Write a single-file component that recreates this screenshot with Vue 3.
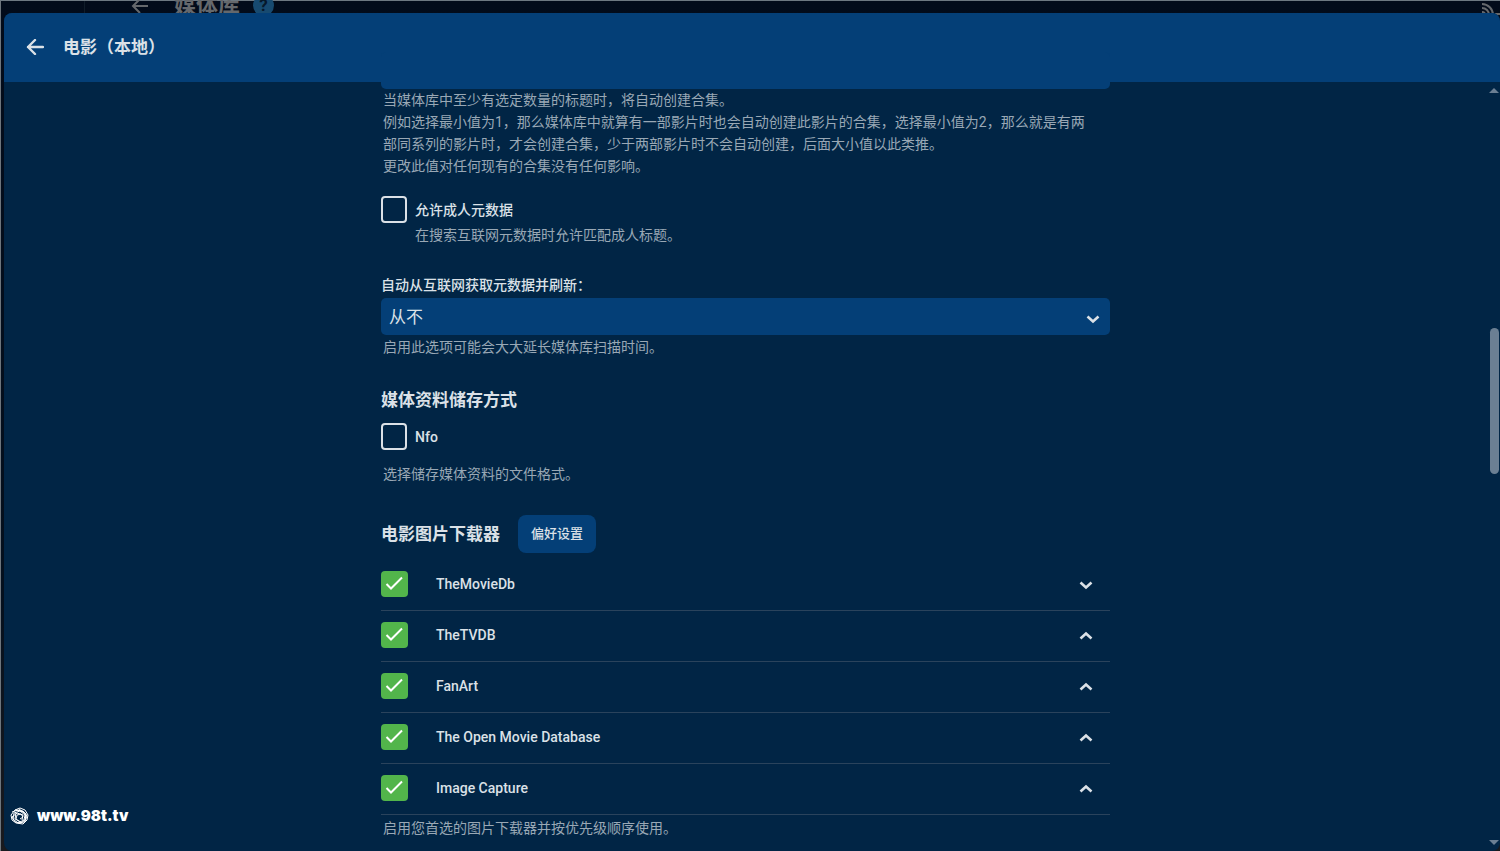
<script setup>
import { ref } from 'vue'

const adult = ref(false)
const nfo = ref(false)
const minimum = ref('2')
const refresh = ref('never')
const downloaders = ref([
  { name: 'TheMovieDb', enabled: true, direction: 'down' },
  { name: 'TheTVDB', enabled: true, direction: 'up' },
  { name: 'FanArt', enabled: true, direction: 'up' },
  { name: 'The Open Movie Database', enabled: true, direction: 'up' },
  { name: 'Image Capture', enabled: true, direction: 'up' }
])
</script>

<template>
  <div class="screen">
    <div class="page" aria-hidden="true">
      <div class="drawer"></div>
      <svg class="page-back" width="24" height="24" viewBox="0 0 24 24"><path d="M20 12H5M12 5l-7 7 7 7" /></svg>
      <span class="page-title">媒体库</span>
      <span class="page-help">?</span>
      <svg class="cast" width="24" height="24" viewBox="0 0 24 24">
        <path d="M2 6V4h20v16h-7M2 18a3 3 0 0 1 3 3M2 14a7 7 0 0 1 7 7M2 10a11 11 0 0 1 11 11" />
      </svg>
    </div>

    <main class="dialog">
      <header class="bar">
        <button class="back" type="button" aria-label="返回">
          <svg width="18" height="16" viewBox="0 0 18 16"><path d="M17 8H2M9 1L2 8l7 7" /></svg>
        </button>
        <h1>电影（本地）</h1>
      </header>

      <div class="body">
        <form class="form" @submit.prevent>
          <div class="select-box first">
            <select v-model="minimum" aria-label="合集最小数量">
              <option value="2"></option>
            </select>
          </div>
          <p class="help">
            当媒体库中至少有选定数量的标题时，将自动创建合集。<br />
            例如选择最小值为1，那么媒体库中就算有一部影片时也会自动创建此影片的合集，选择最小值为2，那么就是有两<br />
            部同系列的影片时，才会创建合集，少于两部影片时不会自动创建，后面大小值以此类推。<br />
            更改此值对任何现有的合集没有任何影响。
          </p>

          <div class="adult">
            <label class="check">
              <input v-model="adult" type="checkbox" aria-describedby="adult-help" />
              <span>允许成人元数据</span>
            </label>
            <p id="adult-help" class="help nested">在搜索互联网元数据时允许匹配成人标题。</p>
          </div>

          <div class="refresh">
            <label class="caption" for="refresh">自动从互联网获取元数据并刷新：</label>
            <div class="select-box">
              <select id="refresh" v-model="refresh">
                <option value="never">从不</option>
              </select>
              <svg class="chevron" width="14" height="10" viewBox="0 0 14 10"><path d="M1.5 2.5L7 7.5l5.5-5" /></svg>
            </div>
            <p class="help">启用此选项可能会大大延长媒体库扫描时间。</p>
          </div>

          <section class="savers">
            <h2>媒体资料储存方式</h2>
            <label class="check">
              <input v-model="nfo" type="checkbox" />
              <span>Nfo</span>
            </label>
            <p class="help">选择储存媒体资料的文件格式。</p>
          </section>

          <section class="fetchers">
            <div class="heading">
              <h2>电影图片下载器</h2>
              <button class="preferences" type="button">偏好设置</button>
            </div>
            <ul>
              <li v-for="item in downloaders" :key="item.name">
                <label class="fetcher">
                  <span class="tick">
                    <input v-model="item.enabled" type="checkbox" />
                    <svg v-if="item.enabled" width="27" height="26" viewBox="0 0 27 26"><path d="M5.5 13l4.5 4.5L21 6.5" /></svg>
                  </span>
                  <span>{{ item.name }}</span>
                </label>
                <button class="move" type="button" :aria-label="item.name">
                  <svg class="chevron" :class="item.direction" width="14" height="10" viewBox="0 0 14 10"><path d="M1.5 2.5L7 7.5l5.5-5" /></svg>
                </button>
              </li>
            </ul>
            <p class="help">启用您首选的图片下载器并按优先级顺序使用。</p>
          </section>
        </form>

        <div class="rail" aria-hidden="true">
          <svg width="10" height="5" viewBox="0 0 10 5"><path d="M5 0l5 5H0z" /></svg>
          <div class="track"><div class="thumb"></div></div>
          <svg width="10" height="5" viewBox="0 0 10 5"><path d="M0 0h10L5 5z" /></svg>
        </div>
      </div>
    </main>

    <div class="watermark">
      <svg width="20" height="18" viewBox="0 0 20 18">
        <path d="M5 3l5-2 5 2 3 5-1 5-4 4-7-1-4-3-1-5 4-5 8 1 4 5-3 6-6 1-5-4 1-6 6-2 5 4-1 5-4 2-4-3 1-4 4-1 2 3-3 2" />
        <path d="M2 5l6-2 7 3 1 6-5 4-6-1-3-5 5-4 6 2-1 5M6 6l-1 6 6 3M9 2l7 5-1 8" />
      </svg>
      <span>www.98t.tv</span>
    </div>
  </div>
</template>

<style>
html,
body {
  margin: 0;
  background: #020c1b;
}
</style>

<style scoped>
.screen {
  position: relative;
  box-sizing: border-box;
  height: 100vh;
  overflow: hidden;
  padding: 13px 0 0 4px;
  background: linear-gradient(#020b1a, #04101e 70%, #191a1e);
  color: #dbe1e7;
  font-family: Roboto, "Noto Sans CJK SC", sans-serif;
  font-size: 14px;
  line-height: 22px;
}

.page {
  position: absolute;
  inset: 0;
  border-top: 1px solid #6d7881;
  border-left: 1px solid #6d757c;
  color: #65686c;
}

.drawer {
  position: absolute;
  top: 0;
  left: 0;
  width: 83px;
  height: 100%;
  border-right: 1px solid #101c29;
}

.page svg {
  fill: none;
  stroke: #65686c;
  stroke-width: 2;
}

.page-back {
  position: absolute;
  top: -7px;
  left: 127px;
}

.page-title {
  position: absolute;
  top: -8px;
  left: 173px;
  font-size: 22px;
  font-weight: 700;
  line-height: 26px;
}

.page-help {
  position: absolute;
  top: -6px;
  left: 252px;
  width: 21px;
  height: 21px;
  border-radius: 50%;
  background: #174a70;
  color: #06182b;
  font-size: 17px;
  font-weight: 700;
  line-height: 21px;
  text-align: center;
}

.cast {
  position: absolute;
  top: -7px;
  right: -4px;
}

.dialog {
  position: relative;
  display: flex;
  flex-direction: column;
  height: 100%;
  overflow: hidden;
  border-radius: 8px;
  background: #012545;
}

.bar {
  display: flex;
  flex: none;
  align-items: center;
  gap: 12px;
  box-sizing: border-box;
  height: 69px;
  padding: 0 0 1px 15px;
  background: #043f77;
}

button {
  padding: 0;
  border: 0;
  background: none;
  color: inherit;
  font: inherit;
}

.back {
  display: grid;
  place-items: center;
  width: 32px;
  height: 32px;
}

.back svg {
  fill: none;
  stroke: #dbe1e7;
  stroke-width: 2.4;
  stroke-linecap: round;
  stroke-linejoin: round;
}

h1,
h2 {
  margin: 0;
  font-size: 17px;
  font-weight: 700;
  line-height: 22px;
}

.body {
  display: flex;
  flex: 1;
  min-height: 0;
}

.form {
  width: 100%;
  max-width: 729px;
  height: max-content;
  margin: 0 auto;
}

.select-box {
  display: grid;
  align-items: center;
}

.select-box.first {
  margin-top: -30px;
}

.select-box > * {
  grid-area: 1 / 1;
}

.select-box .chevron {
  justify-self: end;
  margin: 4px 10px 0 0;
  pointer-events: none;
}

select {
  width: 100%;
  height: 37px;
  padding: 0 32px 0 8px;
  border: 0;
  border-radius: 5px;
  appearance: none;
  background: #043f77;
  color: #dbe1e7;
  font-family: inherit;
  font-size: 17px;
}

.chevron {
  display: block;
  fill: none;
  stroke: #dbe1e7;
  stroke-width: 2.6;
}

.chevron.up {
  transform: rotate(180deg);
}

.help {
  margin: 0;
  padding-left: 2px;
  color: #99a8b5;
}

.help.nested {
  padding: 1px 0 0 34px;
}

.check {
  display: flex;
  align-items: center;
  gap: 8px;
  width: max-content;
  font-weight: 500;
}

.check input {
  box-sizing: border-box;
  width: 26px;
  height: 27px;
  margin: 0;
  border: 2px solid #dbe1e7;
  border-radius: 4px;
  appearance: none;
}

.adult {
  margin-top: 19px;
}

.refresh {
  margin-top: 28px;
}

.caption {
  display: block;
  margin-bottom: 2px;
  font-weight: 500;
}

.refresh .help {
  margin-top: 1px;
}

.savers {
  margin-top: 31px;
}

.savers .check {
  margin: 12px 0 13px;
}

.fetchers {
  margin-top: 30px;
}

.heading {
  display: flex;
  align-items: center;
  gap: 18px;
}

.preferences {
  height: 38px;
  padding: 0 13px;
  border-radius: 8px;
  background: #043f77;
  font-size: 13px;
  font-weight: 500;
}

ul {
  margin: 7px 0 2px;
  padding: 0;
  list-style: none;
}

li {
  display: flex;
  align-items: center;
  justify-content: space-between;
  padding: 11px 0 13px;
  border-bottom: 1px solid #2a435c;
}

.fetcher {
  display: flex;
  align-items: center;
  gap: 28px;
  font-weight: 500;
}

.tick {
  display: grid;
}

.tick > * {
  grid-area: 1 / 1;
}

.tick input {
  width: 27px;
  height: 26px;
  margin: 0;
  border-radius: 4px;
  appearance: none;
  background: #2a435c;
}

.tick input:checked {
  background: #52b54b;
}

.tick svg {
  fill: none;
  stroke: #fff;
  stroke-width: 2;
  pointer-events: none;
}

.move {
  display: grid;
  place-items: center;
  width: 26px;
  height: 26px;
  padding-top: 2px;
  margin-right: 11px;
}

.rail {
  display: flex;
  flex: none;
  flex-direction: column;
  align-items: flex-end;
  width: 12px;
  padding: 6px 1px 6px 0;
}

.rail svg {
  fill: #6b7f93;
}

.track {
  display: grid;
  flex: 1;
  grid-template-rows: 235fr 146fr 366fr;
}

.thumb {
  grid-row: 2;
  width: 9px;
  border-radius: 5px;
  background: #6b7f93;
}

.watermark {
  position: absolute;
  bottom: 24px;
  left: 10px;
  display: flex;
  align-items: center;
  gap: 7px;
  color: #fff;
  font-family: Inter, sans-serif;
  font-size: 15px;
  font-weight: 900;
}

.watermark svg {
  fill: none;
  stroke: #fff;
  stroke-width: 1;
}
</style>
